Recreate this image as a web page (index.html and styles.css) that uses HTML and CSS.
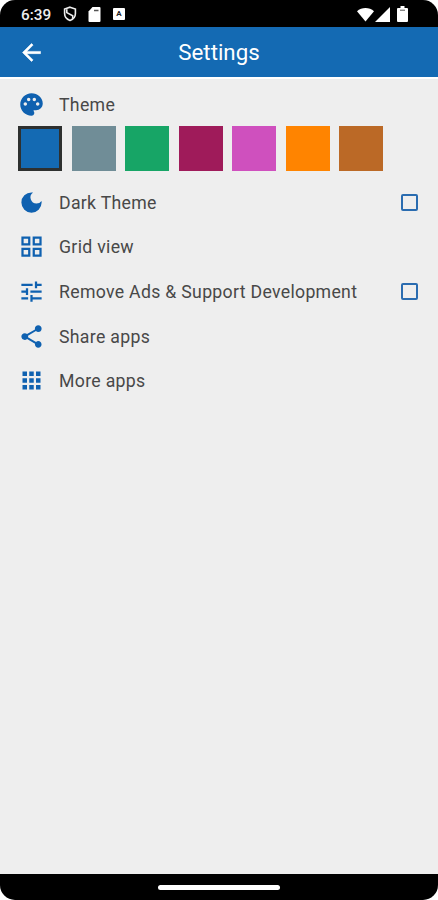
FILE: index.html
```html
<!DOCTYPE html>
<html lang="en">
<head>
<meta charset="UTF-8">
<meta name="viewport" content="width=device-width, initial-scale=1.0">
<title>Settings</title>
<link rel="stylesheet" href="styles.css">
</head>
<body>
<div class="phone">
  <div class="status-bar">
    <span class="clock">6:39</span>
    <svg class="status-shield" viewBox="0 0 14 16" width="14" height="16">
      <path d="M7 1.200 12.400 3v4.600c0 3.200-2.300 5.800-5.400 6.900-3.100-1.100-5.400-3.700-5.400-6.900V3z" fill="none" stroke="#eee" stroke-width="1.600"/>
      <path d="M3.800 3.200v3.400l5.900 3.200v2.800" fill="none" stroke="#eee" stroke-width="1.600"/>
    </svg>
    <svg class="status-card" viewBox="0 0 13 15" width="13" height="15">
      <path d="M4.500 0H11.500Q12.500 0 12.500 1V14Q12.500 15 11.500 15H1.500Q.5 15 .5 14V4.500z" fill="#fff"/>
      <path d="M6 3.500h4.500" stroke="#555" stroke-width="1.400"/>
    </svg>
    <span class="status-a">A</span>
    <svg class="status-wifi" viewBox="0 0 18 15" width="17" height="15">
      <path d="M0 4C5-.6 13-.6 18 4L9 15z" fill="#fff"/>
    </svg>
    <svg class="status-signal" viewBox="0 0 15 15" width="15" height="15">
      <path d="M15 0v15H0z" fill="#fff"/>
    </svg>
    <svg class="status-battery" viewBox="0 0 11 16" width="11" height="16">
      <path d="M3.500 0h4v2H10q1 0 1 1v12q0 1-1 1H1q-1 0-1-1V3q0-1 1-1h2.500z" fill="#fff"/>
      <path d="M3 4.200h5" stroke="#555" stroke-width="1"/>
    </svg>
  </div>

  <header class="app-bar">
    <svg class="back" viewBox="0 0 24 24" width="27" height="27">
      <path d="M20 11H7.830l5.590-5.590L12 4l-8 8 8 8 1.410-1.410L7.830 13H20z" fill="#fff" stroke="#fff" stroke-width=".5"/>
    </svg>
    <h1 class="title">Settings</h1>
  </header>

  <main class="settings">
    <div class="row row-theme">
      <svg class="icon" viewBox="0 0 24 24">
        <path d="M12 2C6.490 2 2 6.490 2 12s4.490 10 10 10c1.380 0 2.500-1.120 2.500-2.500 0-.610-.230-1.200-.640-1.670-.080-.100-.130-.210-.130-.330 0-.280.220-.500.500-.500H16c3.310 0 6-2.690 6-6 0-4.960-4.490-9-10-9zm5.500 11c-.830 0-1.500-.670-1.500-1.500s.670-1.500 1.500-1.500 1.500.670 1.500 1.500-.670 1.500-1.500 1.500zm-3-4c-.830 0-1.500-.670-1.500-1.500S13.670 6 14.500 6s1.500.670 1.500 1.500S15.330 9 14.500 9zM5 11.500c0-.830.670-1.500 1.500-1.500s1.500.670 1.500 1.500S7.330 13 6.500 13 5 12.330 5 11.500zm6-4c0 .830-.670 1.500-1.500 1.500S8 8.330 8 7.500 8.670 6 9.500 6s1.500.670 1.500 1.500z"/>
      </svg>
      <span class="label">Theme</span>
    </div>
    <div class="swatches">
      <span class="swatch blue selected"></span>
      <span class="swatch slate"></span>
      <span class="swatch green"></span>
      <span class="swatch maroon"></span>
      <span class="swatch pink"></span>
      <span class="swatch orange"></span>
      <span class="swatch brown"></span>
    </div>
    <div class="row">
      <svg class="icon" viewBox="0 0 24 24">
        <path d="M12 3a9 9 0 1 0 9 9c0-.460-.040-.920-.100-1.360a5.390 5.390 0 0 1-4.400 2.260 5.400 5.400 0 0 1-3.140-9.800c-.440-.060-.900-.100-1.360-.100z"/>
      </svg>
      <span class="label">Dark Theme</span>
      <span class="checkbox"></span>
    </div>
    <div class="row">
      <svg class="icon" viewBox="0 0 24 24">
        <path d="M3 3v8h8V3H3zm6 6H5V5h4v4zm-6 4v8h8v-8H3zm6 6H5v-4h4v4zm4-16v8h8V3h-8zm6 6h-4V5h4v4zm-6 4v8h8v-8h-8zm6 6h-4v-4h4v4z"/>
      </svg>
      <span class="label">Grid view</span>
    </div>
    <div class="row">
      <svg class="icon" viewBox="0 0 24 24">
        <path d="M3 17v2h6v-2H3zM3 5v2h10V5H3zm10 16v-2h8v-2h-8v-2h-2v6h2zM7 9v2H3v2h4v2h2V9H7zm14 4v-2H11v2h10zm-6-4h2V7h4V5h-4V3h-2v6z"/>
      </svg>
      <span class="label">Remove Ads &amp; Support Development</span>
      <span class="checkbox"></span>
    </div>
    <div class="row">
      <svg class="icon" viewBox="0 0 24 24">
        <path d="M18 16.080c-.760 0-1.440.300-1.960.770L8.910 12.700c.050-.230.090-.460.090-.700s-.040-.470-.090-.700l7.050-4.110c.540.500 1.250.810 2.040.810 1.660 0 3-1.340 3-3s-1.340-3-3-3-3 1.340-3 3c0 .240.040.470.090.700L8.040 9.810C7.500 9.310 6.790 9 6 9c-1.660 0-3 1.340-3 3s1.340 3 3 3c.790 0 1.500-.310 2.040-.810l7.120 4.160c-.050.210-.080.430-.080.650 0 1.610 1.310 2.920 2.920 2.920s2.920-1.310 2.920-2.920-1.310-2.920-2.920-2.920z"/>
      </svg>
      <span class="label">Share apps</span>
    </div>
    <div class="row">
      <svg class="icon" viewBox="0 0 24 24">
        <path d="M4 8h4V4H4v4zm6 12h4v-4h-4v4zm-6 0h4v-4H4v4zm0-6h4v-4H4v4zm6 0h4v-4h-4v4zm6-10v4h4V4h-4zm-6 4h4V4h-4v4zm6 6h4v-4h-4v4zm0 6h4v-4h-4v4z"/>
      </svg>
      <span class="label">More apps</span>
    </div>
  </main>

  <div class="nav-bar">
    <span class="handle"></span>
  </div>
</div>
</body>
</html>
```

FILE: styles.css
```css
* {
  box-sizing: border-box;
}

body {
  margin: 0;
  background-color: #fff;
  font-family: Roboto, sans-serif;
}

.phone {
  height: 900px;
  display: flex;
  flex-direction: column;
  background-color: #eee;
  border-radius: 15px;
  overflow: hidden;
}

.status-bar {
  height: 27px;
  flex: none;
  display: flex;
  align-items: center;
  padding: 1px 30px 0 21px;
  background-color: #000;
}

.clock {
  width: 42px;
  color: #eee;
  font-size: 15.3px;
  font-weight: 500;
  line-height: 20px;
  padding-top: 1px;
}

.status-card {
  margin-left: 11px;
}

.status-a {
  width: 12px;
  height: 12px;
  margin-left: 12px;
  background-color: #fff;
  color: #222;
  border-radius: 1px;
  font-size: 8px;
  font-weight: 700;
  line-height: 12px;
  text-align: center;
}

.status-wifi {
  margin-left: auto;
}

.status-signal {
  margin-left: 1px;
}

.status-battery {
  margin-left: 7px;
}

.app-bar {
  height: 52px;
  flex: none;
  display: grid;
  grid-template-columns: 27px 1fr 27px;
  align-items: center;
  padding: 0 18px;
  background-color: #146ab3;
  border-bottom: 2px solid #fff;
}

.title {
  margin: 0;
  color: #fff;
  font-size: 22.3px;
  font-weight: 400;
  line-height: 30px;
  text-align: center;
}

.settings {
  flex: 1;
  padding: 3px 20px 0 18px;
}

.row {
  height: 44.6px;
  display: flex;
  align-items: center;
}

.row-theme {
  height: 44px;
}

.icon {
  width: 27px;
  height: 27px;
  margin-right: 14px;
  fill: #0f61b0;
}

.label {
  color: #484848;
  font-size: 17.7px;
  letter-spacing: 0.3px;
  line-height: 24px;
  padding-top: 1px;
}

.checkbox {
  width: 17px;
  height: 17px;
  margin-left: auto;
  border: 2px solid #2a6cb0;
  border-radius: 2px;
}

.swatches {
  display: flex;
  gap: 9.500px;
  margin-bottom: 9px;
}

.swatch {
  width: 44px;
  height: 45px;
}

.selected {
  border: 3px solid #2e302f;
}

.blue {
  background-color: #146ab3;
}

.slate {
  background-color: #708d97;
}

.green {
  background-color: #17a566;
}

.maroon {
  background-color: #9f1b5a;
}

.pink {
  background-color: #cf50be;
}

.orange {
  background-color: #ff8400;
}

.brown {
  background-color: #bb6926;
}

.nav-bar {
  height: 26px;
  flex: none;
  display: flex;
  justify-content: center;
  align-items: center;
  background-color: #000;
}

.handle {
  width: 122px;
  height: 5px;
  background-color: #fff;
  border-radius: 3px;
}
```
